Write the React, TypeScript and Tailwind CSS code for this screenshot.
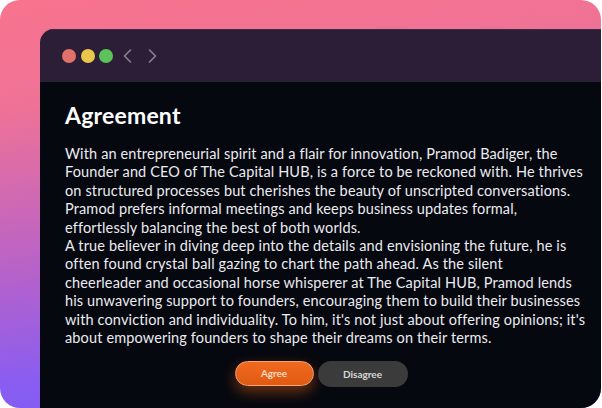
import React from "react";

const lines1 = [
  "With an entrepreneurial spirit and a flair for innovation, Pramod Badiger, the",
  "Founder and CEO of The Capital HUB, is a force to be reckoned with. He thrives",
  "on structured processes but cherishes the beauty of unscripted conversations.",
  "Pramod prefers informal meetings and keeps business updates formal,",
  "effortlessly balancing the best of both worlds.",
];
const lines2 = [
  "A true believer in diving deep into the details and envisioning the future, he is",
  "often found crystal ball gazing to chart the path ahead. As the silent",
  "cheerleader and occasional horse whisperer at The Capital HUB, Pramod lends",
  "his unwavering support to founders, encouraging them to build their businesses",
  "with conviction and individuality. To him, it's not just about offering opinions; it's",
  "about empowering founders to shape their dreams on their terms.",
];

export default function App() {
  return (
    <div className="w-[602px] h-[408px] overflow-hidden bg-white">
      <div
        className="w-[601px] h-[408px] rounded-[20px] overflow-hidden pl-[40px] pt-[29px] bg-[linear-gradient(172deg,#f8738d_0%,#ef7296_22%,#b862c8_55%,#8a5df0_78%,#735cfc_100%)]"
        style={{ fontFamily: "Lato, 'Open Sans', sans-serif" }}
      >
        <div className="w-[600px] h-[400px] rounded-tl-[14px] overflow-hidden flex flex-col">
          <div className="h-[53px] bg-[#2c1e37] border-t border-[#3a2a45] flex items-center pl-[22px] shrink-0">
            <span className="w-[14px] h-[14px] rounded-full bg-[#e2706a]" />
            <span className="w-[14px] h-[14px] rounded-full bg-[#e9c54a] ml-[4.5px]" />
            <span className="w-[14px] h-[14px] rounded-full bg-[#5cc25a] ml-[4.5px]" />
            <svg width="10" height="16" viewBox="0 0 10 16" className="ml-[9px]">
              <path d="M8.5 2 L2.5 8 L8.5 14" fill="none" stroke="#8a8090" strokeWidth="1.6" strokeLinecap="round" strokeLinejoin="round" />
            </svg>
            <svg width="10" height="16" viewBox="0 0 10 16" className="ml-[16px]">
              <path d="M1.5 2 L7.5 8 L1.5 14" fill="none" stroke="#8a8090" strokeWidth="1.6" strokeLinecap="round" strokeLinejoin="round" />
            </svg>
          </div>
          <div className="flex-1 bg-[#06080f] pl-[25px] pt-[17px]">
            <h1 className="text-[23px] leading-[32px] font-bold text-white tracking-[0.2px]">Agreement</h1>
            <div className="mt-[14px] text-[14.5px] leading-[18.4px] tracking-[0.14px] text-[#ecebef]">
              {lines1.map((l, i) => (
                <div key={"a" + i} className="whitespace-nowrap">{l}</div>
              ))}
              {lines2.map((l, i) => (
                <div key={"b" + i} className="whitespace-nowrap">{l}</div>
              ))}
            </div>
            <div className="flex justify-center gap-[4px] mt-[14px] w-[512px]">
              <button className="w-[79px] h-[25px] rounded-full text-[10px] font-semibold text-[#fde4d4] border border-[#f4a372] bg-[linear-gradient(180deg,#ef6a1f,#e05a12)] shadow-[0_6px_14px_rgba(230,100,20,0.45)]">
                Agree
              </button>
              <button className="w-[90px] h-[26px] rounded-full text-[10px] font-bold text-[#d6d6d6] bg-[#3b3b3b]">
                Disagree
              </button>
            </div>
          </div>
        </div>
      </div>
    </div>
  );
}
